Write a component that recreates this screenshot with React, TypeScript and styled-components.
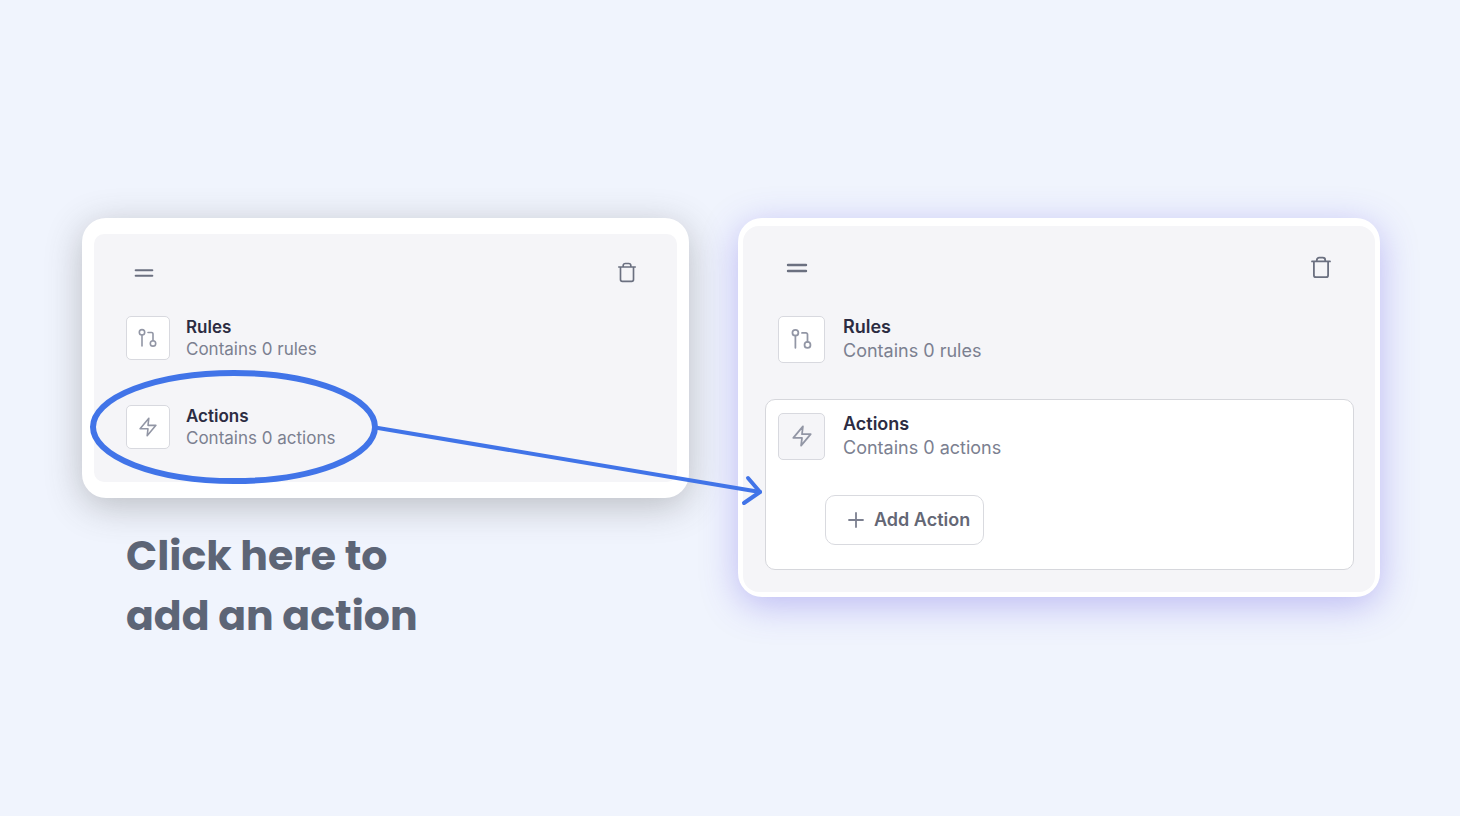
import React from "react";
import styled, { createGlobalStyle, css } from "styled-components";

type Size = "compact" | "large";

const GlobalStyle = createGlobalStyle`
  *, *::before, *::after { box-sizing: border-box; }
  body {
    margin: 0;
    background: #f0f4fd;
    font-family: Inter, "Liberation Sans", sans-serif;
  }
  button { font: inherit; color: inherit; cursor: pointer; }
`;

const Page = styled.main`
  display: grid;
  grid-template-columns: minmax(0, 607fr) minmax(0, 642fr);
  align-items: start;
  gap: 49px;
  min-height: 100vh;
  padding: 218px 80px 80px 82px;
`;

const Step = styled.section`
  min-width: 0;
`;

const Card = styled.div<{ $size: Size }>`
  position: relative;
  border-radius: 24px;
  background: #ffffff;
  ${({ $size }) =>
    $size === "compact"
      ? css`
          padding: 16px 12px;
          box-shadow: 0 8px 36px rgba(70, 70, 70, 0.32);
        `
      : css`
          padding: 8px 5px 5px;
          box-shadow: 0 8px 36px rgba(88, 72, 225, 0.34);
        `}
`;

const Panel = styled.div<{ $size: Size }>`
  display: flex;
  flex-direction: column;
  background: #f5f5f8;
  border-radius: ${({ $size }) => ($size === "compact" ? "10px" : "16px")};
  padding: ${({ $size }) => ($size === "compact" ? "27px 32px 33px" : "30px 21px 22px 22px")};
`;

const Toolbar = styled.div<{ $size: Size }>`
  display: flex;
  justify-content: space-between;
  height: 24px;
  padding: ${({ $size }) => ($size === "compact" ? "0 6px" : "0 21px 0 20px")};
  margin-bottom: ${({ $size }) => ($size === "compact" ? "31px" : "35px")};
`;

const IconButton = styled.button`
  display: flex;
  align-items: center;
  justify-content: center;
  width: 24px;
  height: 24px;
  padding: 0;
  border: 0;
  background: none;
  color: #6b7080;
`;

const Row = styled.button<{ $size: Size }>`
  display: flex;
  align-items: center;
  width: 100%;
  padding: 0;
  border: 0;
  background: none;
  text-align: left;
  gap: ${({ $size }) => ($size === "compact" ? "16px" : "18px")};
`;

const Rows = styled.div<{ $size: Size }>`
  display: flex;
  flex-direction: column;
  gap: ${({ $size }) => ($size === "compact" ? "45px" : "36px")};
`;

const Inset = styled.div`
  padding-left: 13px;
`;

const Tile = styled.span<{ $size: Size; $muted?: boolean }>`
  display: flex;
  flex: none;
  align-items: center;
  justify-content: center;
  width: ${({ $size }) => ($size === "compact" ? "44px" : "47px")};
  height: ${({ $size }) => ($size === "compact" ? "44px" : "47px")};
  border: 1px solid #d8d9df;
  border-radius: 5px;
  background: ${({ $muted }) => ($muted ? "#f5f5f8" : "#ffffff")};
  color: #9296a5;
`;

const Label = styled.span<{ $size: Size }>`
  display: flex;
  flex-direction: column;
  font-size: ${({ $size }) => ($size === "compact" ? "17px" : "18px")};
  line-height: ${({ $size }) => ($size === "compact" ? "22px" : "24px")};
`;

const Title = styled.strong`
  font-weight: 600;
  color: #2c2c42;
`;

const Detail = styled.span`
  color: #7b8090;
`;

const OpenGroup = styled.div`
  padding: 12px 12px 24px;
  border: 1px solid #d6d7dc;
  border-radius: 10px;
  background: #ffffff;
`;

const AddButton = styled.button`
  display: flex;
  align-items: center;
  gap: 9px;
  height: 50px;
  margin: 35px 0 0 47px;
  padding: 0 13px 0 21px;
  border: 1px solid #d9dadf;
  border-radius: 10px;
  background: #ffffff;
  color: #646775;
  font-size: 18px;
  font-weight: 600;
  line-height: 24px;
  white-space: nowrap;
`;

const Caption = styled.h1`
  max-width: 320px;
  margin: 28px 0 0 44px;
  color: #5d6576;
  font-family: Poppins, Inter, sans-serif;
  font-size: 41px;
  font-weight: 700;
  line-height: 60px;
`;

const Callout = styled.svg`
  position: absolute;
  z-index: 2;
  top: 152px;
  left: 8px;
  width: calc(100% + 63px);
  height: 136px;
  overflow: visible;
  pointer-events: none;
  fill: none;
  stroke: #4174e8;
  stroke-linecap: round;
  stroke-linejoin: round;
`;

const iconSize = (size: Size) => (size === "compact" ? 22 : 24);
const glyphSize = (size: Size) => (size === "compact" ? 20 : 22);

const Handle = ({ size }: { size: Size }) => (
  <svg width={iconSize(size)} height={iconSize(size)} viewBox="0 0 24 24" fill="none" stroke="currentColor" strokeWidth="2.4" strokeLinecap="round" aria-hidden="true">
    <path d="M3 9h18M3 15h18" />
  </svg>
);

const Trash = ({ size }: { size: Size }) => (
  <svg width={iconSize(size)} height={iconSize(size)} viewBox="0 0 24 24" fill="none" stroke="currentColor" strokeWidth="1.8" strokeLinecap="round" strokeLinejoin="round" aria-hidden="true">
    <path d="M3 5.4h18M7.8 5.2V4a2.4 2.4 0 0 1 2.4-2.4h3.6A2.4 2.4 0 0 1 16.2 4v1.2M4.9 5.4v13.8a2 2 0 0 0 2 2h10.2a2 2 0 0 0 2-2V5.4" />
  </svg>
);

const Branch = ({ size }: { size: Size }) => (
  <svg width={glyphSize(size)} height={glyphSize(size)} viewBox="0 0 20 20" fill="none" stroke="currentColor" strokeWidth="1.6" strokeLinecap="round" strokeLinejoin="round" aria-hidden="true">
    <circle cx="4" cy="4.3" r="2.7" />
    <circle cx="15" cy="15.4" r="2.7" />
    <path d="M4 7v11M10 4.5h3.5A1.4 1.4 0 0 1 15 5.9v6.8" />
  </svg>
);

const Bolt = ({ size }: { size: Size }) => (
  <svg width={glyphSize(size)} height={glyphSize(size)} viewBox="0 0 24 24" fill="none" stroke="currentColor" strokeWidth="1.9" strokeLinecap="round" strokeLinejoin="round" aria-hidden="true">
    <path d="M13 1.5 2.5 14H12l-1 8.5L21.5 10H12z" />
  </svg>
);

const Plus = () => (
  <svg width="18" height="18" viewBox="0 0 18 18" fill="none" stroke="#7c8090" strokeWidth="1.8" strokeLinecap="round" aria-hidden="true">
    <path d="M9 2v14M2 9h14" />
  </svg>
);

const PanelToolbar = ({ size }: { size: Size }) => (
  <Toolbar $size={size}>
    <IconButton type="button" aria-label="Reorder">
      <Handle size={size} />
    </IconButton>
    <IconButton type="button" aria-label="Delete">
      <Trash size={size} />
    </IconButton>
  </Toolbar>
);

interface ItemProps {
  size: Size;
  title: string;
  detail: string;
  icon: React.ReactNode;
  muted?: boolean;
}

const Item = ({ size, title, detail, icon, muted }: ItemProps) => (
  <Row type="button" $size={size}>
    <Tile $size={size} $muted={muted}>
      {icon}
    </Tile>
    <Label $size={size}>
      <Title>{title}</Title>
      <Detail>{detail}</Detail>
    </Label>
  </Row>
);

export default function App() {
  return (
    <>
      <GlobalStyle />
      <Page>
        <Step>
          <Card $size="compact">
            <Panel $size="compact">
              <PanelToolbar size="compact" />
              <Rows $size="compact">
                <Item size="compact" title="Rules" detail="Contains 0 rules" icon={<Branch size="compact" />} />
                <Item size="compact" title="Actions" detail="Contains 0 actions" icon={<Bolt size="compact" />} />
              </Rows>
            </Panel>
            <Callout aria-hidden="true">
              <ellipse cx="144" cy="57" rx="141" ry="54" strokeWidth="6" />
              <line x1="288" y1="58" x2="100%" y2="122" strokeWidth="4" />
              <svg x="100%" y="122" overflow="visible">
                <path d="M-12-14 0 0-16 11" strokeWidth="4" />
              </svg>
            </Callout>
          </Card>
          <Caption>
            Click here to
            <br />
            add an action
          </Caption>
        </Step>
        <Step>
          <Card $size="large">
            <Panel $size="large">
              <PanelToolbar size="large" />
              <Rows $size="large">
                <Inset>
                  <Item size="large" title="Rules" detail="Contains 0 rules" icon={<Branch size="large" />} />
                </Inset>
                <OpenGroup>
                  <Item size="large" title="Actions" detail="Contains 0 actions" icon={<Bolt size="large" />} muted />
                  <AddButton type="button">
                    <Plus />
                    Add Action
                  </AddButton>
                </OpenGroup>
              </Rows>
            </Panel>
          </Card>
        </Step>
      </Page>
    </>
  );
}
